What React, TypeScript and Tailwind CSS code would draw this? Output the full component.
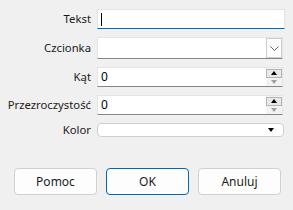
const font = { fontFamily: '"Noto Sans", "Open Sans", sans-serif' };

function Label({ children }: { children: React.ReactNode }) {
  return <div className="w-[91px] shrink-0 text-right text-[11.3px] leading-none text-[#1b1b1b]">{children}</div>;
}

function Spinner() {
  return (
    <div className="flex h-full w-[16px] shrink-0 flex-col justify-center bg-[#f3f3f3]">
      <div className="flex h-[9px] items-center justify-center border border-[#b5b5b5] bg-[#e9e9e9]">
        <div className="h-0 w-0 border-x-[3.5px] border-b-[4px] border-x-transparent border-b-black" />
      </div>
      <div className="flex h-[8px] items-center justify-center">
        <div className="h-0 w-0 border-x-[3.5px] border-t-[4px] border-x-transparent border-t-[#a0a0a0]" />
      </div>
    </div>
  );
}

export default function App() {
  return (
    <div className="h-[210px] w-[293px] bg-[#f0f0f0] pt-[9px]" style={font}>
      {/* Tekst */}
      <div className="flex h-[20px] items-center gap-[6px]">
        <Label>Tekst</Label>
        <div className="flex h-full w-[188px] items-center border border-[#e3e3e3] border-b-[#0067c0] bg-white pl-[3px]">
          <div className="h-[13px] w-px bg-black" />
        </div>
      </div>

      {/* Czcionka */}
      <div className="mt-[8px] flex h-[22px] items-center gap-[6px]">
        <Label>Czcionka</Label>
        <div className="flex h-full w-[186px] items-stretch border border-[#e5e5e5] border-b-[#868686] bg-white">
          <div className="flex-1" />
          <div className="flex w-[16px] items-center justify-center border border-[#cdcdcd] bg-[#fdfdfd]">
            <svg width="9" height="5" viewBox="0 0 9 5" fill="none">
              <path d="M0.5 0.5 L4.5 4.5 L8.5 0.5" stroke="#606060" strokeWidth="1" />
            </svg>
          </div>
        </div>
      </div>

      {/* Kąt */}
      <div className="mt-[8px] flex h-[20px] items-center gap-[6px]">
        <Label>Kąt</Label>
        <div className="flex h-full w-[186px] items-stretch border border-[#e5e5e5] border-b-[#868686] bg-white">
          <div className="flex flex-1 items-center pl-[3px] text-[12px] text-black">0</div>
          <Spinner />
        </div>
      </div>

      {/* Przezroczystość */}
      <div className="mt-[8px] flex h-[20px] items-center gap-[6px]">
        <Label>Przezroczystość</Label>
        <div className="flex h-full w-[186px] items-stretch border border-[#e5e5e5] border-b-[#868686] bg-white">
          <div className="flex flex-1 items-center pl-[3px] text-[12px] text-black">0</div>
          <Spinner />
        </div>
      </div>

      {/* Kolor */}
      <div className="mt-[8px] flex h-[14px] items-center gap-[6px]">
        <Label>Kolor</Label>
        <div className="flex h-full w-[187px] items-center justify-end rounded-[4px] border border-[#cfcfcf] bg-white pr-[9px]">
          <div className="h-0 w-0 border-x-[3.5px] border-t-[4px] border-x-transparent border-t-black" />
        </div>
      </div>

      {/* Buttons */}
      <div className="mt-[31px] flex h-[27px] gap-[9px] pl-[14px]">
        <button className="w-[83px] rounded-[4px] border border-[#d0d0d0] bg-[#fdfdfd] text-[12px] text-[#1b1b1b]">Pomoc</button>
        <button className="w-[83px] rounded-[4px] border border-[#0067c0] bg-[#fdfdfd] text-[12px] text-[#1b1b1b]">OK</button>
        <button className="w-[83px] rounded-[4px] border border-[#d0d0d0] bg-[#fdfdfd] text-[12px] text-[#1b1b1b]">Anuluj</button>
      </div>
    </div>
  );
}
